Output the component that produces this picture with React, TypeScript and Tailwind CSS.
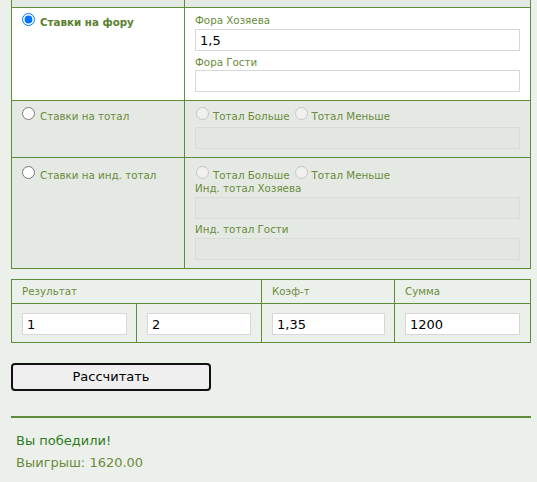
import React from "react";

function Radio({ checked, disabled, name, className = "" }: { checked?: boolean; disabled?: boolean; name: string; className?: string }) {
  return (
    <input
      type="radio"
      name={name}
      defaultChecked={checked}
      disabled={disabled}
      className={"m-0 block h-[13px] w-[13px] shrink-0 " + className}
    />
  );
}

function TotalRadios({ name }: { name: string }) {
  return (
    <div className="flex h-[16px] items-start">
      <Radio name={name} disabled className="ml-[1px] mt-[1px]" />
      <span className="ml-[4px] mt-[3px] whitespace-nowrap leading-[15px]">Тотал Больше</span>
      <Radio name={name} disabled className="ml-[5px] mt-[1px]" />
      <span className="ml-[4px] mt-[3px] whitespace-nowrap leading-[15px]">Тотал Меньше</span>
    </div>
  );
}

export default function App() {
  return (
    <div className="min-h-screen bg-[#ecf0eb] pl-[11px] font-['DejaVu_Sans',sans-serif] text-[10.3px] text-[#6b8b3b]">
      {/* bet type table */}
      <div className="w-[520px] border-x border-b border-[#5e8c3a] bg-[#e5e9e3]">
        <div className="flex h-[7px]">
          <div className="w-[173px] border-r border-[#5e8c3a]" />
          <div className="flex-1" />
        </div>

        {/* row 1 */}
        <div className="flex border-t border-[#5e8c3a] bg-white">
          <div className="w-[173px] border-r border-[#5e8c3a] pl-[10px] pt-[5px]">
            <label className="flex items-start gap-[5px]">
              <Radio name="bet" checked />
              <span className="mt-[2px] font-bold leading-[15px] text-[#5a8030]">Ставки на фору</span>
            </label>
          </div>
          <div className="flex-1 px-[10px] pt-[5px] pb-[8px]">
            <div className="leading-[15px]">Фора Хозяева</div>
            <input
              type="text"
              defaultValue="1,5"
              className="mt-[1px] block h-[22px] w-full border border-[#d6d8d5] bg-white px-[4px] text-[13px] text-black outline-none"
            />
            <div className="mt-[4px] leading-[15px]">Фора Гости</div>
            <input
              type="text"
              className="block h-[22px] w-full border border-[#d6d8d5] bg-white px-[4px] text-[13px] text-black outline-none"
            />
          </div>
        </div>

        {/* row 2 */}
        <div className="flex border-t border-[#5e8c3a]">
          <div className="w-[173px] border-r border-[#5e8c3a] pl-[10px] pt-[6px]">
            <label className="flex items-start gap-[5px]">
              <Radio name="bet" />
              <span className="mt-[2px] leading-[15px]">Ставки на тотал</span>
            </label>
          </div>
          <div className="flex-1 px-[10px] pt-[5px] pb-[8px]">
            <TotalRadios name="t1" />
            <input
              type="text"
              disabled
              className="mt-[5px] block h-[22px] w-full border border-[#d9dcd7] bg-[#e3e7e1] outline-none"
            />
          </div>
        </div>

        {/* row 3 */}
        <div className="flex border-t border-[#5e8c3a]">
          <div className="w-[173px] border-r border-[#5e8c3a] pl-[10px] pt-[8px]">
            <label className="flex items-start gap-[5px]">
              <Radio name="bet" />
              <span className="mt-[2px] leading-[15px]">Ставки на инд. тотал</span>
            </label>
          </div>
          <div className="flex-1 px-[10px] pt-[7px] pb-[8px]">
            <TotalRadios name="t2" />
            <div className="leading-[15px]">Инд. тотал Хозяева</div>
            <input
              type="text"
              disabled
              className="mt-[1px] block h-[22px] w-full border border-[#d9dcd7] bg-[#e3e7e1] outline-none"
            />
            <div className="mt-[3px] leading-[15px]">Инд. тотал Гости</div>
            <input
              type="text"
              disabled
              className="mt-[1px] block h-[22px] w-full border border-[#d9dcd7] bg-[#e3e7e1] outline-none"
            />
          </div>
        </div>
      </div>

      {/* result table */}
      <div className="mt-[10px] w-[520px] border border-[#5e8c3a]">
        <div className="flex h-[23px]">
          <div className="flex w-[250px] items-center border-r border-[#5e8c3a] pl-[10px]">Результат</div>
          <div className="flex w-[133px] items-center border-r border-[#5e8c3a] pl-[10px]">Коэф-т</div>
          <div className="flex flex-1 items-center pl-[10px]">Сумма</div>
        </div>
        <div className="flex border-t border-[#5e8c3a]">
          <div className="w-[125px] border-r border-[#5e8c3a] pl-[10px] pr-[9px] pt-[9px] pb-[7px]">
            <input type="text" defaultValue="1" className="block h-[22px] w-full border border-[#d6d8d5] bg-white px-[4px] text-[13px] text-black outline-none" />
          </div>
          <div className="w-[125px] border-r border-[#5e8c3a] pl-[10px] pr-[10px] pt-[9px] pb-[7px]">
            <input type="text" defaultValue="2" className="block h-[22px] w-full border border-[#d6d8d5] bg-white px-[4px] text-[13px] text-black outline-none" />
          </div>
          <div className="w-[133px] border-r border-[#5e8c3a] pl-[10px] pr-[9px] pt-[9px] pb-[7px]">
            <input type="text" defaultValue="1,35" className="block h-[22px] w-full border border-[#d6d8d5] bg-white px-[4px] text-[13px] text-black outline-none" />
          </div>
          <div className="flex-1 pl-[10px] pr-[10px] pt-[9px] pb-[7px]">
            <input type="text" defaultValue="1200" className="block h-[22px] w-full border border-[#d6d8d5] bg-white px-[4px] text-[13px] text-black outline-none" />
          </div>
        </div>
      </div>

      <button
        type="button"
        className="mt-[20px] block h-[28px] w-[200px] rounded-[4px] border-2 border-[#111] bg-[#efefef] text-[13px] text-black"
      >
        Рассчитать
      </button>

      <div className="mt-[25px] h-[2px] w-[520px] bg-[#5e8c3a]" />

      <div className="mt-[12px] pl-[5px] text-[13px] leading-[22px]">
        <div className="text-[#2f7a24]">Вы победили!</div>
        <div className="text-[#6b8b3b]">Выигрыш: 1620.00</div>
      </div>
    </div>
  );
}
